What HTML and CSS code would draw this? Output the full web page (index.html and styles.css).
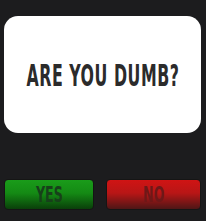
FILE: index.html
```html
<!DOCTYPE html>
<html lang="en">
<head>
  <meta charset="UTF-8" />
  <meta name="viewport" content="width=device-width, initial-scale=1.0" />
  <title>Are you dumb?</title>
  <link rel="stylesheet" href="styles.css">
</head>
<body>
  <div class="screen">
    <div class="card">
      <h1>ARE YOU DUMB?</h1>
    </div>
    <div class="answers">
      <button class="btn btn-yes"><span>YES</span></button>
      <button class="btn btn-no"><span>NO</span></button>
    </div>
  </div>
</body>
</html>
```

FILE: styles.css
```css
* {
  box-sizing: border-box;
  margin: 0;
  padding: 0;
}
html, body {
  background-color: #1c1c1e;
  width: 206px;
  height: 221px;
  overflow: hidden;
}
.screen {
  padding: 16px 5px 0 4px;
}
.card {
  height: 117px;
  background: #fff;
  border-radius: 14px;
  display: flex;
  align-items: center;
  justify-content: center;
}
.card h1 {
  font-family: "DejaVu Sans", sans-serif;
  font-weight: bold;
  font-size: 31px;
  letter-spacing: 1px;
  color: #2b2b2b;
  transform: scaleX(0.51);
  white-space: nowrap;
}
.answers {
  display: flex;
  justify-content: space-between;
  margin-top: 46px;
}
.btn {
  height: 31px;
  border: 1px solid #151515;
  border-radius: 4px;
  font-family: "DejaVu Sans", sans-serif;
  font-weight: bold;
  font-size: 21px;
  cursor: pointer;
}
.btn span {
  display: inline-block;
  transform: scaleX(0.6);
}
.btn-yes {
  width: 90px;
  background: linear-gradient(#1a9c1a 0%, #148a14 45%, #0a3f0a 100%);
  color: #17401a;
}
.btn-no {
  width: 95px;
  background: linear-gradient(#d01414 0%, #b81616 45%, #4e1616 100%);
  color: #6e1818;
}
```
